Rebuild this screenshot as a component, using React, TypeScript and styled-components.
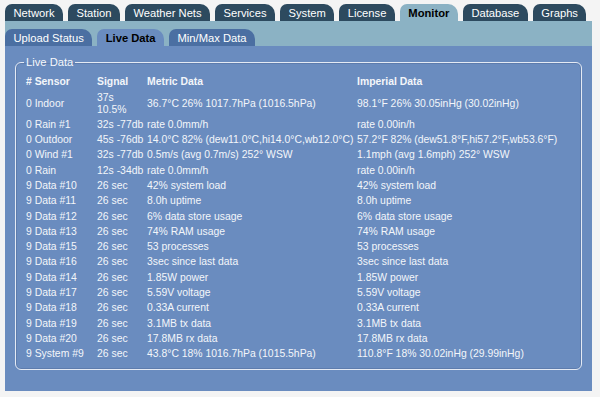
import styled, { createGlobalStyle } from 'styled-components';

const GlobalStyle = createGlobalStyle`
  body {
    margin: 0;
    background: #f4f4f4;
    font-family: "Liberation Sans", Arial, Helvetica, sans-serif;
  }
`

const Page = styled.div`
  width: 587px;
  padding: 4px 0 0 5px;
`

const TabRow = styled.div`
  display: flex;
  align-items: flex-end;
  gap: 5px;
  height: 17px;
`

const Tab = styled.div<{ $active?: boolean; $bg: string; $activeBg: string }>`
  height: 17px;
  line-height: 18px;
  padding: 0 8.5px;
  font-size: 11.2px;
  white-space: nowrap;
  color: ${p => (p.$active ? '#000' : '#fff')};
  font-weight: ${p => (p.$active ? 'bold' : 'normal')};
  background: ${p => (p.$active ? p.$activeBg : p.$bg)};
  border-radius: 7px 10px 0 0;
`

const SubBar = styled.div`
  background: #8bb2c4;
  padding-top: 8px;
`

const Content = styled.div`
  background: #6a8cbf;
  padding: 9.5px 10px 21px 10px;
`

const Fieldset = styled.fieldset`
  margin: 0;
  padding: 6.2px 10px 7px 10px;
  border: 1px solid #e4eaf4;
  border-radius: 6px;
  box-shadow: inset 0 0 0 1px rgba(70, 95, 140, 0.35);
`

const Legend = styled.legend`
  padding: 0 2px;
  margin-left: -2px;
  font-size: 11.2px;
  line-height: 13px;
  color: #f6f8fb;
`

const Table = styled.table`
  width: 100%;
  border-collapse: collapse;
  table-layout: fixed;
  font-size: 10.4px;
  line-height: 12px;
  color: #f3f6fa;
`

const HeadCell = styled.th`
  text-align: left;
  font-weight: bold;
  padding: 1.65px 3px 1.65px 0;
`

const Cell = styled.td`
  padding: 1.65px 3px 1.65px 0;
  vertical-align: middle;
`

const mainTabs = ['Network', 'Station', 'Weather Nets', 'Services', 'System', 'License', 'Monitor', 'Database', 'Graphs']
const subTabs = ['Upload Status', 'Live Data', 'Min/Max Data']

type Row = [string, string, string, string]

const rows: Row[] = [
  ['0 Indoor', '37s 10.5%', '36.7°C 26% 1017.7hPa (1016.5hPa)', '98.1°F 26% 30.05inHg (30.02inHg)'],
  ['0 Rain #1', '32s -77db', 'rate 0.0mm/h', 'rate 0.00in/h'],
  ['0 Outdoor', '45s -76db', '14.0°C 82% (dew11.0°C,hi14.0°C,wb12.0°C)', '57.2°F 82% (dew51.8°F,hi57.2°F,wb53.6°F)'],
  ['0 Wind #1', '32s -77db', '0.5m/s (avg 0.7m/s) 252° WSW', '1.1mph (avg 1.6mph) 252° WSW'],
  ['0 Rain', '12s -34db', 'rate 0.0mm/h', 'rate 0.00in/h'],
  ['9 Data #10', '26 sec', '42% system load', '42% system load'],
  ['9 Data #11', '26 sec', '8.0h uptime', '8.0h uptime'],
  ['9 Data #12', '26 sec', '6% data store usage', '6% data store usage'],
  ['9 Data #13', '26 sec', '74% RAM usage', '74% RAM usage'],
  ['9 Data #15', '26 sec', '53 processes', '53 processes'],
  ['9 Data #16', '26 sec', '3sec since last data', '3sec since last data'],
  ['9 Data #14', '26 sec', '1.85W power', '1.85W power'],
  ['9 Data #17', '26 sec', '5.59V voltage', '5.59V voltage'],
  ['9 Data #18', '26 sec', '0.33A current', '0.33A current'],
  ['9 Data #19', '26 sec', '3.1MB tx data', '3.1MB tx data'],
  ['9 Data #20', '26 sec', '17.8MB rx data', '17.8MB rx data'],
  ['9 System #9', '26 sec', '43.8°C 18% 1016.7hPa (1015.5hPa)', '110.8°F 18% 30.02inHg (29.99inHg)'],
]

export default function App() {
  return (
    <Page>
      <GlobalStyle />
      <TabRow>
        {mainTabs.map(t => (
          <Tab key={t} $active={t === 'Monitor'} $bg="#2d4a5f" $activeBg="#8bb2c4">{t}</Tab>
        ))}
      </TabRow>
      <SubBar>
        <TabRow>
          {subTabs.map(t => (
            <Tab key={t} $active={t === 'Live Data'} $bg="#4b6fa2" $activeBg="#6a8cbf">{t}</Tab>
          ))}
        </TabRow>
      </SubBar>
      <Content>
        <Fieldset>
          <Legend>Live Data</Legend>
          <Table>
            <colgroup>
              <col style={{ width: 71 }} />
              <col style={{ width: 50 }} />
              <col style={{ width: 210 }} />
              <col />
            </colgroup>
            <thead>
              <tr>
                <HeadCell># Sensor</HeadCell>
                <HeadCell>Signal</HeadCell>
                <HeadCell>Metric Data</HeadCell>
                <HeadCell>Imperial Data</HeadCell>
              </tr>
            </thead>
            <tbody>
              {rows.map(r => (
                <tr key={r[0]}>
                  {r.map((c, i) => <Cell key={i}>{c}</Cell>)}
                </tr>
              ))}
            </tbody>
          </Table>
        </Fieldset>
      </Content>
    </Page>
  );
}
